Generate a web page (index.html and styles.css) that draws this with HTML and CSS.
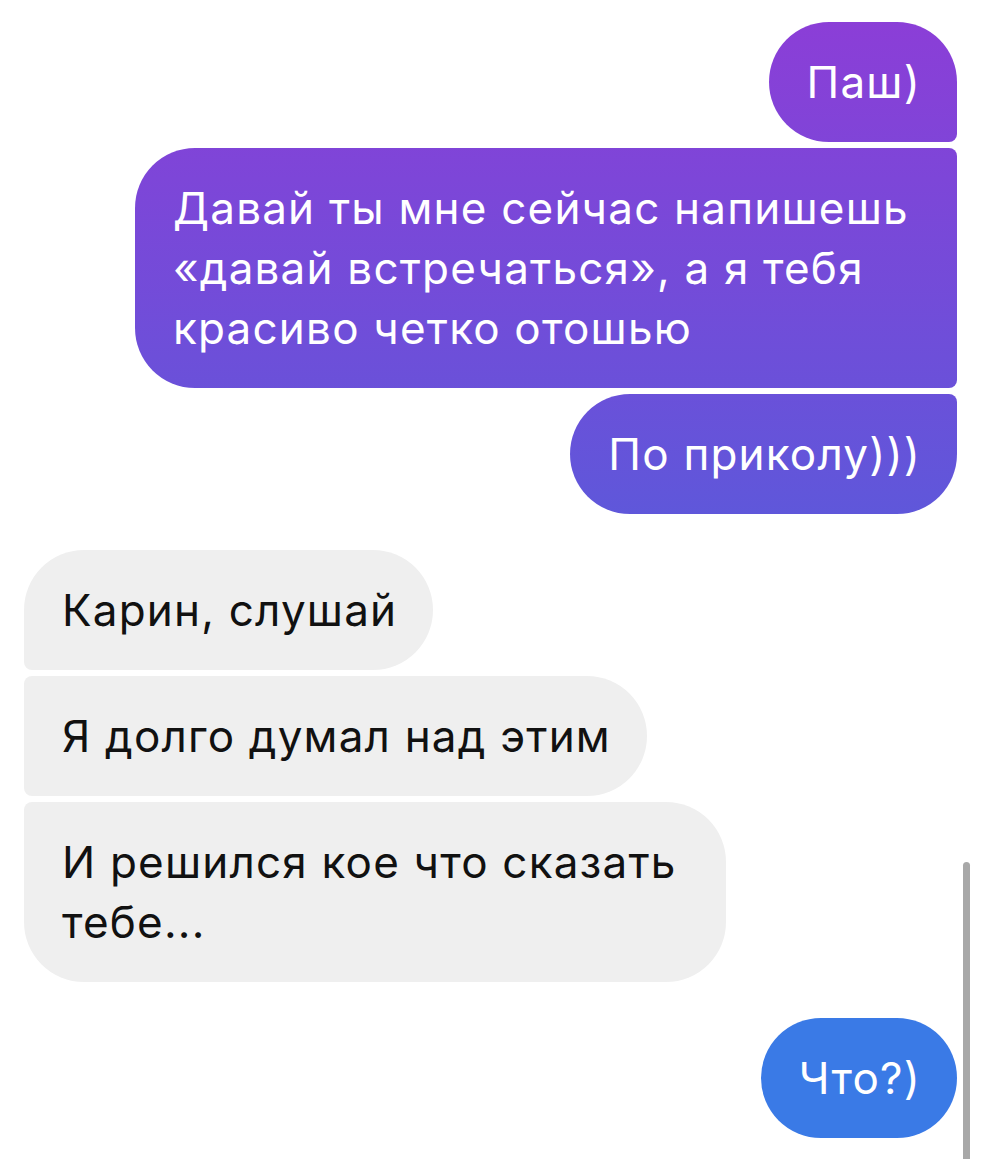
FILE: index.html
```html
<!DOCTYPE html>
<html lang="ru">
<head>
    <meta charset="UTF-8">
    <meta name="viewport" content="width=device-width, initial-scale=1.0">
    <title>Чат</title>
    <link rel="stylesheet" href="styles.css">
</head>
<body>
    <div class="chat">
        <div class="group out">
            <div class="bubble first">Паш)</div>
            <div class="bubble middle">Давай ты мне сейчас напишешь «давай встречаться», а я тебя красиво четко отошью</div>
            <div class="bubble last">По приколу)))</div>
        </div>

        <div class="group in">
            <div class="bubble first">Карин, слушай</div>
            <div class="bubble middle">Я долго думал над этим</div>
            <div class="bubble last">И решился кое что сказать тебе...</div>
        </div>

        <div class="group out">
            <div class="bubble single blue">Что?)</div>
        </div>
    </div>

    <div class="scrollbar"></div>
</body>
</html>
```

FILE: styles.css
```css
/* Основа */
body {
    margin: 0;
    background-color: #fff;
    font-family: Inter, Roboto, "Liberation Sans", Arial, sans-serif;
}
.chat {
    display: flex;
    flex-direction: column;
    gap: 36px;
    padding: 22px 24px 0 24px;
}
.group {
    display: flex;
    flex-direction: column;
    gap: 6px;
}
.group.out {
    align-items: flex-end;
}
.group.in {
    align-items: flex-start;
}

/* Пузыри */
.bubble {
    box-sizing: border-box;
    padding: 30px 36px 30px 38px;
    font-size: 44px;
    line-height: 60px;
    letter-spacing: 1.2px;
    border-radius: 60px;
}
.out .bubble {
    max-width: 822px;
    color: #fff;
    background-image: linear-gradient(180deg, #8b3ed7 22px, #5f57da 514px);
    background-attachment: fixed;
}
.in .bubble {
    max-width: 702px;
    color: #111;
    background-color: #efefef;
}
.out .bubble.first {
    border-bottom-right-radius: 8px;
}
.out .bubble.middle {
    border-top-right-radius: 8px;
    border-bottom-right-radius: 8px;
}
.out .bubble.last {
    border-top-right-radius: 8px;
}
.in .bubble.first {
    border-bottom-left-radius: 8px;
}
.in .bubble.middle {
    border-top-left-radius: 8px;
    border-bottom-left-radius: 8px;
}
.in .bubble.last {
    border-top-left-radius: 8px;
}
.out .bubble.blue {
    background-image: none;
    background-color: #3a7ae6;
}

/* Полоса прокрутки */
.scrollbar {
    position: absolute;
    top: 862px;
    left: 963px;
    width: 7px;
    height: 297px;
    background-color: #a8a8a8;
    border-radius: 4px 4px 0 0;
}
```
